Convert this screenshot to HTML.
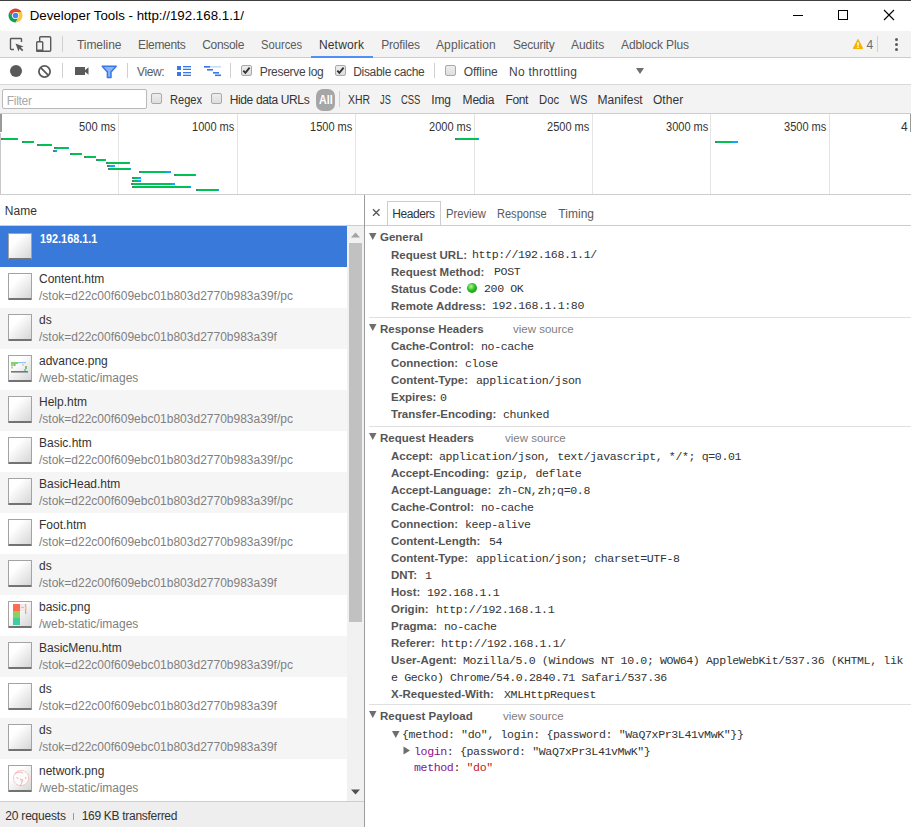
<!DOCTYPE html>
<html><head><meta charset="utf-8"><style>
html,body{margin:0;padding:0;width:911px;height:827px;overflow:hidden;background:#fff;position:relative}
body>div{position:absolute}
.t{position:absolute;line-height:0;white-space:nowrap}
</style></head><body>
<div style="left:0px;top:0px;width:911px;height:1px;background:#3f3f3f"></div>
<div style="left:0px;top:1px;width:911px;height:30px;background:#fff"></div>
<svg style="position:absolute;left:8px;top:7.6px" width="15" height="15" viewBox="0 0 15 15">
<path d="M7.5,7.5 L7.5,4.0 L13.562,4.0 A7 7 0 0 0 1.438,4.0 L4.469,9.25 Z" fill="#db4437"/>
<path d="M7.5,7.5 L7.5,4.0 L13.562,4.0 A7 7 0 0 1 7.5,14.5 L10.531,9.25 Z" fill="#fcc934"/>
<path d="M7.5,7.5 L4.469,9.25 L1.438,4.0 A7 7 0 0 0 7.5,14.5 L10.531,9.25 Z" fill="#0f9d58"/>
<circle cx="7.5" cy="7.5" r="3.5" fill="#fff"/>
<circle cx="7.5" cy="7.5" r="2.75" fill="#4285f4"/>
</svg>
<div class="t" style="left:29.70px;top:16.39px;font-size:13.3px;color:#000;font-family:'Liberation Sans', sans-serif;letter-spacing:0.003px;">Developer Tools - http://192.168.1.1/</div>
<div style="left:793px;top:15px;width:10px;height:1px;background:#000"></div>
<div style="left:838px;top:10px;width:10px;height:10px;border:1px solid #000;box-sizing:border-box"></div>
<svg style="position:absolute;left:883px;top:9px" width="12" height="12" viewBox="0 0 12 12"><path d="M1 1 L11 11 M11 1 L1 11" stroke="#000" stroke-width="1.1"/></svg>
<div style="left:0px;top:31px;width:911px;height:26px;background:#f3f3f3"></div>
<div style="left:0px;top:57px;width:911px;height:1px;background:#cdcdcd"></div>
<svg style="position:absolute;left:8px;top:36px" width="18" height="18" viewBox="0 0 18 18">
<path d="M6 13.5 H3.2 Q2.5 13.5 2.5 12.8 V3.2 Q2.5 2.5 3.2 2.5 H12.8 Q13.5 2.5 13.5 3.2 V6" fill="none" stroke="#5a5a5a" stroke-width="1.4"/>
<path d="M7.5 7.5 L15.5 10.5 L12.8 11.6 L15.3 14.1 L14.1 15.3 L11.6 12.8 L10.5 15.5 Z" fill="#5a5a5a"/>
</svg>
<svg style="position:absolute;left:34px;top:34px" width="20" height="20" viewBox="0 0 20 20">
<rect x="5.7" y="2.7" width="11" height="14.6" rx="1" fill="none" stroke="#5a5a5a" stroke-width="1.4"/>
<rect x="2.7" y="7.7" width="6" height="9.6" rx="0.8" fill="#f3f3f3" stroke="#5a5a5a" stroke-width="1.4"/>
<rect x="2.5" y="15.5" width="6.5" height="2" fill="#5a5a5a"/>
</svg>
<div style="left:62px;top:36px;width:1px;height:16px;background:#d0d0d0"></div>
<div class="t" style="left:77.00px;top:44.84px;font-size:12px;color:#5a5a5a;font-family:'Liberation Sans', sans-serif;letter-spacing:-0.059px;">Timeline</div>
<div class="t" style="left:138.00px;top:44.84px;font-size:12px;color:#5a5a5a;font-family:'Liberation Sans', sans-serif;letter-spacing:-0.316px;">Elements</div>
<div class="t" style="left:202.20px;top:44.84px;font-size:12px;color:#5a5a5a;font-family:'Liberation Sans', sans-serif;letter-spacing:-0.307px;">Console</div>
<div class="t" style="left:260.90px;top:44.84px;font-size:12px;color:#5a5a5a;font-family:'Liberation Sans', sans-serif;transform:scaleX(0.9339);transform-origin:0 0;">Sources</div>
<div class="t" style="left:318.90px;top:44.84px;font-size:12px;color:#333;font-family:'Liberation Sans', sans-serif;letter-spacing:0.193px;">Network</div>
<div class="t" style="left:381.20px;top:44.84px;font-size:12px;color:#5a5a5a;font-family:'Liberation Sans', sans-serif;letter-spacing:-0.189px;">Profiles</div>
<div class="t" style="left:436.00px;top:44.84px;font-size:12px;color:#5a5a5a;font-family:'Liberation Sans', sans-serif;letter-spacing:0.109px;">Application</div>
<div class="t" style="left:513.00px;top:44.84px;font-size:12px;color:#5a5a5a;font-family:'Liberation Sans', sans-serif;letter-spacing:-0.236px;">Security</div>
<div class="t" style="left:570.90px;top:44.84px;font-size:12px;color:#5a5a5a;font-family:'Liberation Sans', sans-serif;letter-spacing:0.008px;">Audits</div>
<div class="t" style="left:621.00px;top:44.84px;font-size:12px;color:#5a5a5a;font-family:'Liberation Sans', sans-serif;letter-spacing:-0.124px;">Adblock Plus</div>
<div style="left:311px;top:56px;width:62px;height:2px;background:#4f8ff6"></div>
<svg style="position:absolute;left:852px;top:38px" width="13" height="12" viewBox="0 0 13 12">
<path d="M6 1.8 L10.4 10.2 H1.6 Z" fill="#f4b400" stroke="#f4b400" stroke-width="1.4" stroke-linejoin="round"/>
<rect x="5.3" y="4.3" width="1.4" height="3.6" fill="#fff"/>
<rect x="5.3" y="8.7" width="1.4" height="1.3" fill="#fff"/>
</svg>
<div class="t" style="left:866.50px;top:44.84px;font-size:12px;color:#6a6a6a;font-family:'Liberation Sans', sans-serif;">4</div>
<div style="left:877px;top:36px;width:1px;height:16px;background:#d0d0d0"></div>
<div style="left:895px;top:37.8px;width:3.4px;height:3.4px;border-radius:50%;background:#5a5a5a"></div>
<div style="left:895px;top:42.8px;width:3.4px;height:3.4px;border-radius:50%;background:#5a5a5a"></div>
<div style="left:895px;top:47.8px;width:3.4px;height:3.4px;border-radius:50%;background:#5a5a5a"></div>
<div style="left:0px;top:58px;width:911px;height:26px;background:#fff"></div>
<div style="left:0px;top:84px;width:911px;height:1px;background:#d9d9d9"></div>
<div style="left:10px;top:65px;width:12px;height:12px;border-radius:50%;background:#5a5a5a"></div>
<svg style="position:absolute;left:37px;top:64px" width="15" height="15" viewBox="0 0 15 15"><circle cx="7.5" cy="7.5" r="5.6" fill="none" stroke="#5a5a5a" stroke-width="1.8"/><path d="M3.6 3.6 L11.4 11.4" stroke="#5a5a5a" stroke-width="1.8"/></svg>
<div style="left:62px;top:63px;width:1px;height:15px;background:#d0d0d0"></div>
<svg style="position:absolute;left:74px;top:66px" width="16" height="10" viewBox="0 0 16 10"><rect x="1" y="1" width="10" height="8" fill="#5a5a5a"/><path d="M10 5 L14.5 1.2 V8.8 Z" fill="#5a5a5a"/></svg>
<svg style="position:absolute;left:101px;top:65px" width="17" height="14" viewBox="0 0 17 14"><path d="M1.2 1.2 H15.2 L10 7 V12.5 L6.4 12.5 V7 Z" fill="#8ab4f8" stroke="#3b78e7" stroke-width="1.5" stroke-linejoin="round"/></svg>
<div style="left:127px;top:63px;width:1px;height:15px;background:#d0d0d0"></div>
<div class="t" style="left:137.00px;top:71.84px;font-size:12px;color:#5a5a5a;font-family:'Liberation Sans', sans-serif;letter-spacing:-0.382px;">View:</div>
<svg style="position:absolute;left:176px;top:65px" width="16" height="12" viewBox="0 0 16 12">
<rect x="1" y="1" width="4" height="4" fill="#3b78e7"/><rect x="1" y="7" width="4" height="4" fill="#3b78e7"/>
<rect x="7" y="1" width="8" height="1.3" fill="#3b78e7"/><rect x="7" y="3.7" width="8" height="1.3" fill="#3b78e7"/>
<rect x="7" y="7" width="8" height="1.3" fill="#3b78e7"/><rect x="7" y="9.7" width="8" height="1.3" fill="#3b78e7"/>
</svg>
<svg style="position:absolute;left:203px;top:65px" width="19" height="12" viewBox="0 0 19 12">
<rect x="1" y="1" width="17" height="1.6" fill="#c8dcf9"/>
<rect x="1" y="1" width="6" height="1.6" fill="#3b78e7"/>
<rect x="4" y="4" width="6" height="1.6" fill="#3b78e7"/>
<rect x="10" y="7" width="6" height="1.6" fill="#3b78e7"/>
<rect x="12" y="9.5" width="6" height="1.6" fill="#3b78e7"/>
</svg>
<div style="left:230px;top:63px;width:1px;height:15px;background:#d0d0d0"></div>
<div style="left:241px;top:65px;width:11px;height:11px;box-sizing:border-box;border:1px solid #a9a9a9;border-radius:2px;background:linear-gradient(#ededed,#dedede)"></div>
<svg style="position:absolute;left:241px;top:65px" width="11" height="11" viewBox="0 0 11 11"><path d="M2.3 5.6 L4.4 7.8 L8.6 2.6" fill="none" stroke="#333" stroke-width="1.9"/></svg>
<div class="t" style="left:259.70px;top:71.84px;font-size:12px;color:#444;font-family:'Liberation Sans', sans-serif;letter-spacing:-0.307px;">Preserve log</div>
<div style="left:335px;top:65px;width:11px;height:11px;box-sizing:border-box;border:1px solid #a9a9a9;border-radius:2px;background:linear-gradient(#ededed,#dedede)"></div>
<svg style="position:absolute;left:335px;top:65px" width="11" height="11" viewBox="0 0 11 11"><path d="M2.3 5.6 L4.4 7.8 L8.6 2.6" fill="none" stroke="#333" stroke-width="1.9"/></svg>
<div class="t" style="left:353.20px;top:71.84px;font-size:12px;color:#444;font-family:'Liberation Sans', sans-serif;letter-spacing:-0.316px;">Disable cache</div>
<div style="left:434px;top:63px;width:1px;height:15px;background:#d0d0d0"></div>
<div style="left:445px;top:65px;width:11px;height:11px;box-sizing:border-box;border:1px solid #a9a9a9;border-radius:2px;background:linear-gradient(#ededed,#dedede)"></div>
<div class="t" style="left:463.80px;top:71.84px;font-size:12px;color:#444;font-family:'Liberation Sans', sans-serif;letter-spacing:-0.078px;">Offline</div>
<div class="t" style="left:509.00px;top:71.84px;font-size:12px;color:#444;font-family:'Liberation Sans', sans-serif;letter-spacing:0.274px;">No throttling</div>
<svg style="position:absolute;left:635px;top:67px" width="10" height="8" viewBox="0 0 10 8"><path d="M1 1 H9 L5 7 Z" fill="#6e6e6e"/></svg>
<div style="left:0px;top:85px;width:911px;height:28px;background:#f3f3f3"></div>
<div style="left:0px;top:113px;width:911px;height:1px;background:#cdcdcd"></div>
<div style="left:2px;top:89px;width:145px;height:20px;box-sizing:border-box;border:1px solid #b9b9b9;border-radius:2px;background:#fff"></div>
<div class="t" style="left:6.80px;top:100.84px;font-size:12px;color:#a9a9a9;font-family:'Liberation Sans', sans-serif;letter-spacing:-0.294px;">Filter</div>
<div style="left:151px;top:93px;width:11px;height:11px;box-sizing:border-box;border:1px solid #a9a9a9;border-radius:2px;background:linear-gradient(#ededed,#dedede)"></div>
<div class="t" style="left:169.60px;top:100.04px;font-size:12px;color:#333;font-family:'Liberation Sans', sans-serif;transform:scaleX(0.9227);transform-origin:0 0;">Regex</div>
<div style="left:211px;top:93px;width:11px;height:11px;box-sizing:border-box;border:1px solid #a9a9a9;border-radius:2px;background:linear-gradient(#ededed,#dedede)"></div>
<div class="t" style="left:229.70px;top:100.04px;font-size:12px;color:#333;font-family:'Liberation Sans', sans-serif;letter-spacing:-0.363px;">Hide data URLs</div>
<div style="left:316px;top:89px;width:19px;height:22px;border-radius:7px;background:#a6a6a6"></div>
<div class="t" style="left:318.70px;top:100.04px;font-size:12px;color:#fff;font-family:'Liberation Sans', sans-serif;font-weight:bold;transform:scaleX(0.8871);transform-origin:0 0;">All</div>
<div style="left:339px;top:91px;width:1px;height:16px;background:#d0d0d0"></div>
<div class="t" style="left:347.80px;top:100.04px;font-size:12px;color:#333;font-family:'Liberation Sans', sans-serif;transform:scaleX(0.8679);transform-origin:0 0;">XHR</div>
<div class="t" style="left:380.00px;top:100.04px;font-size:12px;color:#333;font-family:'Liberation Sans', sans-serif;transform:scaleX(0.7709);transform-origin:0 0;">JS</div>
<div class="t" style="left:401.00px;top:100.04px;font-size:12px;color:#333;font-family:'Liberation Sans', sans-serif;transform:scaleX(0.7867);transform-origin:0 0;">CSS</div>
<div class="t" style="left:431.30px;top:100.04px;font-size:12px;color:#333;font-family:'Liberation Sans', sans-serif;letter-spacing:-0.155px;">Img</div>
<div class="t" style="left:462.60px;top:100.04px;font-size:12px;color:#333;font-family:'Liberation Sans', sans-serif;letter-spacing:-0.200px;">Media</div>
<div class="t" style="left:505.40px;top:100.04px;font-size:12px;color:#333;font-family:'Liberation Sans', sans-serif;letter-spacing:-0.333px;">Font</div>
<div class="t" style="left:539.00px;top:100.04px;font-size:12px;color:#333;font-family:'Liberation Sans', sans-serif;transform:scaleX(0.9376);transform-origin:0 0;">Doc</div>
<div class="t" style="left:569.60px;top:100.04px;font-size:12px;color:#333;font-family:'Liberation Sans', sans-serif;transform:scaleX(0.9006);transform-origin:0 0;">WS</div>
<div class="t" style="left:597.60px;top:100.04px;font-size:12px;color:#333;font-family:'Liberation Sans', sans-serif;letter-spacing:-0.037px;">Manifest</div>
<div class="t" style="left:652.90px;top:100.04px;font-size:12px;color:#333;font-family:'Liberation Sans', sans-serif;letter-spacing:0.075px;">Other</div>
<div style="left:0px;top:114px;width:911px;height:80px;background:#fff"></div>
<div style="left:0px;top:194px;width:911px;height:1px;background:#cdcdcd"></div>
<div style="left:118px;top:114px;width:1px;height:80px;background:#e4e4e4"></div>
<div style="left:237px;top:114px;width:1px;height:80px;background:#e4e4e4"></div>
<div style="left:355px;top:114px;width:1px;height:80px;background:#e4e4e4"></div>
<div style="left:474px;top:114px;width:1px;height:80px;background:#e4e4e4"></div>
<div style="left:592px;top:114px;width:1px;height:80px;background:#e4e4e4"></div>
<div style="left:710px;top:114px;width:1px;height:80px;background:#e4e4e4"></div>
<div style="left:829px;top:114px;width:1px;height:80px;background:#e4e4e4"></div>
<div class="t" style="left:79.40px;top:127.34px;font-size:12px;color:#333;font-family:'Liberation Sans', sans-serif;transform:scaleX(0.9273);transform-origin:0 0;">500 ms</div>
<div class="t" style="left:192.00px;top:127.34px;font-size:12px;color:#333;font-family:'Liberation Sans', sans-serif;transform:scaleX(0.9192);transform-origin:0 0;">1000 ms</div>
<div class="t" style="left:310.40px;top:127.34px;font-size:12px;color:#333;font-family:'Liberation Sans', sans-serif;transform:scaleX(0.9192);transform-origin:0 0;">1500 ms</div>
<div class="t" style="left:428.80px;top:127.34px;font-size:12px;color:#333;font-family:'Liberation Sans', sans-serif;transform:scaleX(0.9192);transform-origin:0 0;">2000 ms</div>
<div class="t" style="left:547.20px;top:127.34px;font-size:12px;color:#333;font-family:'Liberation Sans', sans-serif;transform:scaleX(0.9192);transform-origin:0 0;">2500 ms</div>
<div class="t" style="left:665.60px;top:127.34px;font-size:12px;color:#333;font-family:'Liberation Sans', sans-serif;transform:scaleX(0.9192);transform-origin:0 0;">3000 ms</div>
<div class="t" style="left:784.00px;top:127.34px;font-size:12px;color:#333;font-family:'Liberation Sans', sans-serif;transform:scaleX(0.9192);transform-origin:0 0;">3500 ms</div>
<div class="t" style="left:901.00px;top:127.34px;font-size:12px;color:#333;font-family:'Liberation Sans', sans-serif;">40</div>
<div style="left:908px;top:114px;width:3px;height:20px;background:#fff"></div>
<div style="left:910px;top:114px;width:1px;height:18px;background:#9a9a9a"></div>
<div style="left:0px;top:114px;width:2px;height:18px;background:#9a9a9a"></div>
<div style="left:0px;top:133px;width:1px;height:61px;background:#c8c8c8"></div>
<div style="left:1px;top:138px;width:2px;height:2px;background:#4f7f73"></div>
<div style="left:3px;top:138px;width:15px;height:2px;background:#00c153"></div>
<div style="left:16.5px;top:138px;width:1.5px;height:2px;background:#0ea6ff"></div>
<div style="left:22px;top:141px;width:2px;height:2px;background:#4f7f73"></div>
<div style="left:24px;top:141px;width:10px;height:2px;background:#00c153"></div>
<div style="left:32.5px;top:141px;width:1.5px;height:2px;background:#0ea6ff"></div>
<div style="left:37px;top:144px;width:2px;height:2px;background:#4f7f73"></div>
<div style="left:39px;top:144px;width:13px;height:2px;background:#00c153"></div>
<div style="left:50.5px;top:144px;width:1.5px;height:2px;background:#0ea6ff"></div>
<div style="left:54px;top:147px;width:2px;height:2px;background:#4f7f73"></div>
<div style="left:56px;top:147px;width:13px;height:2px;background:#00c153"></div>
<div style="left:67.5px;top:147px;width:1.5px;height:2px;background:#0ea6ff"></div>
<div style="left:53px;top:150px;width:2px;height:2px;background:#4f7f73"></div>
<div style="left:55px;top:150px;width:2px;height:2px;background:#00c153"></div>
<div style="left:55.5px;top:150px;width:1.5px;height:2px;background:#0ea6ff"></div>
<div style="left:70px;top:153px;width:2px;height:2px;background:#4f7f73"></div>
<div style="left:72px;top:153px;width:10px;height:2px;background:#00c153"></div>
<div style="left:80.5px;top:153px;width:1.5px;height:2px;background:#0ea6ff"></div>
<div style="left:84px;top:156px;width:2px;height:2px;background:#4f7f73"></div>
<div style="left:86px;top:156px;width:10px;height:2px;background:#00c153"></div>
<div style="left:94.5px;top:156px;width:1.5px;height:2px;background:#0ea6ff"></div>
<div style="left:96px;top:159px;width:2px;height:2px;background:#4f7f73"></div>
<div style="left:98px;top:159px;width:8px;height:2px;background:#00c153"></div>
<div style="left:104.5px;top:159px;width:1.5px;height:2px;background:#0ea6ff"></div>
<div style="left:106px;top:162px;width:2px;height:2px;background:#4f7f73"></div>
<div style="left:108px;top:162px;width:22px;height:2px;background:#00c153"></div>
<div style="left:128.5px;top:162px;width:1.5px;height:2px;background:#0ea6ff"></div>
<div style="left:107px;top:165px;width:2px;height:2px;background:#4f7f73"></div>
<div style="left:109px;top:165px;width:6px;height:2px;background:#00c153"></div>
<div style="left:110px;top:165px;width:5px;height:2px;background:#0ea6ff"></div>
<div style="left:108px;top:168px;width:2px;height:2px;background:#4f7f73"></div>
<div style="left:110px;top:168px;width:21px;height:2px;background:#00c153"></div>
<div style="left:129.5px;top:168px;width:1.5px;height:2px;background:#0ea6ff"></div>
<div style="left:139px;top:171px;width:2px;height:2px;background:#4f7f73"></div>
<div style="left:141px;top:171px;width:30px;height:2px;background:#00c153"></div>
<div style="left:166px;top:171px;width:5px;height:2px;background:#0ea6ff"></div>
<div style="left:174px;top:174px;width:2px;height:2px;background:#4f7f73"></div>
<div style="left:176px;top:174px;width:20px;height:2px;background:#00c153"></div>
<div style="left:194.5px;top:174px;width:1.5px;height:2px;background:#0ea6ff"></div>
<div style="left:132px;top:177px;width:2px;height:2px;background:#4f7f73"></div>
<div style="left:134px;top:177px;width:7px;height:2px;background:#00c153"></div>
<div style="left:138px;top:177px;width:3px;height:2px;background:#0ea6ff"></div>
<div style="left:132px;top:180px;width:2px;height:2px;background:#4f7f73"></div>
<div style="left:134px;top:180px;width:7px;height:2px;background:#00c153"></div>
<div style="left:138px;top:180px;width:3px;height:2px;background:#0ea6ff"></div>
<div style="left:131px;top:183px;width:2px;height:2px;background:#4f7f73"></div>
<div style="left:133px;top:183px;width:42px;height:2px;background:#00c153"></div>
<div style="left:172px;top:183px;width:3px;height:2px;background:#0ea6ff"></div>
<div style="left:132px;top:186px;width:2px;height:2px;background:#4f7f73"></div>
<div style="left:134px;top:186px;width:57px;height:2px;background:#00c153"></div>
<div style="left:189.5px;top:186px;width:1.5px;height:2px;background:#0ea6ff"></div>
<div style="left:196px;top:189px;width:2px;height:2px;background:#4f7f73"></div>
<div style="left:198px;top:189px;width:21px;height:2px;background:#00c153"></div>
<div style="left:217.5px;top:189px;width:1.5px;height:2px;background:#0ea6ff"></div>
<div style="left:455px;top:138px;width:2px;height:2px;background:#4f7f73"></div>
<div style="left:457px;top:138px;width:22px;height:2px;background:#00c153"></div>
<div style="left:477.5px;top:138px;width:1.5px;height:2px;background:#0ea6ff"></div>
<div style="left:715px;top:141px;width:2px;height:2px;background:#4f7f73"></div>
<div style="left:717px;top:141px;width:21px;height:2px;background:#00c153"></div>
<div style="left:732px;top:141px;width:6px;height:2px;background:#0ea6ff"></div>
<div style="left:0px;top:195px;width:364px;height:30px;background:#fff"></div>
<div style="left:0px;top:225px;width:911px;height:1px;background:#cdcdcd"></div>
<div class="t" style="left:4.80px;top:210.84px;font-size:12px;color:#333;font-family:'Liberation Sans', sans-serif;">Name</div>
<div style="left:0px;top:226px;width:347px;height:41px;background:#3879d9"></div>
<div style="left:8px;top:233px;width:24px;height:27px;box-sizing:border-box;border:1px solid #a3a3a3;border-bottom:2px solid #737373;border-radius:1px;background:linear-gradient(135deg,#ffffff 30%,#d6d6d6 100%)"></div>
<div class="t" style="left:40.20px;top:238.64px;font-size:12px;color:#fff;font-family:'Liberation Sans', sans-serif;font-weight:bold;transform:scaleX(0.9039);transform-origin:0 0;">192.168.1.1</div>
<div style="left:0px;top:267px;width:347px;height:41px;background:#fff"></div>
<div style="left:8px;top:273px;width:24px;height:27px;box-sizing:border-box;border:1px solid #a3a3a3;border-bottom:2px solid #737373;border-radius:1px;background:linear-gradient(135deg,#ffffff 30%,#d6d6d6 100%)"></div>
<div class="t" style="left:39.00px;top:278.84px;font-size:12px;color:#333;font-family:'Liberation Sans', sans-serif;">Content.htm</div>
<div class="t" style="left:39.00px;top:295.84px;font-size:12px;color:#808080;font-family:'Liberation Sans', sans-serif;">/stok=d22c00f609ebc01b803d2770b983a39f/pc</div>
<div style="left:0px;top:308px;width:347px;height:41px;background:#f5f5f5"></div>
<div style="left:8px;top:314px;width:24px;height:27px;box-sizing:border-box;border:1px solid #a3a3a3;border-bottom:2px solid #737373;border-radius:1px;background:linear-gradient(135deg,#ffffff 30%,#d6d6d6 100%)"></div>
<div class="t" style="left:39.00px;top:319.84px;font-size:12px;color:#333;font-family:'Liberation Sans', sans-serif;">ds</div>
<div class="t" style="left:39.00px;top:336.84px;font-size:12px;color:#808080;font-family:'Liberation Sans', sans-serif;">/stok=d22c00f609ebc01b803d2770b983a39f</div>
<div style="left:0px;top:349px;width:347px;height:41px;background:#fff"></div>
<div style="left:8px;top:355px;width:24px;height:27px;box-sizing:border-box;border:1px solid #a3a3a3;border-bottom:2px solid #737373;border-radius:1px;background:linear-gradient(135deg,#ffffff 30%,#d6d6d6 100%)"></div>
<svg style="position:absolute;left:10px;top:361px" width="20" height="13" viewBox="0 0 20 13"><rect x="1" y="1" width="7" height="2" fill="#7ed957"/><rect x="8" y="1" width="8" height="1.2" fill="#8cc8f0"/><rect x="1" y="3" width="2" height="2" fill="#8fd870"/><rect x="3.5" y="3" width="2" height="2" fill="#999"/><rect x="12" y="3.5" width="2" height="1" fill="#f4a0a0"/><rect x="1" y="5.5" width="2" height="2" fill="#a6e086"/><rect x="15" y="5" width="2" height="3" fill="#7cc860"/><rect x="14" y="8" width="2" height="2" fill="#7fc4f0"/><rect x="1" y="10" width="17" height="1.6" fill="#777"/></svg>
<div class="t" style="left:39.00px;top:360.84px;font-size:12px;color:#333;font-family:'Liberation Sans', sans-serif;">advance.png</div>
<div class="t" style="left:39.00px;top:377.84px;font-size:12px;color:#808080;font-family:'Liberation Sans', sans-serif;">/web-static/images</div>
<div style="left:0px;top:390px;width:347px;height:41px;background:#f5f5f5"></div>
<div style="left:8px;top:396px;width:24px;height:27px;box-sizing:border-box;border:1px solid #a3a3a3;border-bottom:2px solid #737373;border-radius:1px;background:linear-gradient(135deg,#ffffff 30%,#d6d6d6 100%)"></div>
<div class="t" style="left:39.00px;top:401.84px;font-size:12px;color:#333;font-family:'Liberation Sans', sans-serif;">Help.htm</div>
<div class="t" style="left:39.00px;top:418.84px;font-size:12px;color:#808080;font-family:'Liberation Sans', sans-serif;">/stok=d22c00f609ebc01b803d2770b983a39f/pc</div>
<div style="left:0px;top:431px;width:347px;height:41px;background:#fff"></div>
<div style="left:8px;top:437px;width:24px;height:27px;box-sizing:border-box;border:1px solid #a3a3a3;border-bottom:2px solid #737373;border-radius:1px;background:linear-gradient(135deg,#ffffff 30%,#d6d6d6 100%)"></div>
<div class="t" style="left:39.00px;top:442.84px;font-size:12px;color:#333;font-family:'Liberation Sans', sans-serif;">Basic.htm</div>
<div class="t" style="left:39.00px;top:459.84px;font-size:12px;color:#808080;font-family:'Liberation Sans', sans-serif;">/stok=d22c00f609ebc01b803d2770b983a39f/pc</div>
<div style="left:0px;top:472px;width:347px;height:41px;background:#f5f5f5"></div>
<div style="left:8px;top:478px;width:24px;height:27px;box-sizing:border-box;border:1px solid #a3a3a3;border-bottom:2px solid #737373;border-radius:1px;background:linear-gradient(135deg,#ffffff 30%,#d6d6d6 100%)"></div>
<div class="t" style="left:39.00px;top:483.84px;font-size:12px;color:#333;font-family:'Liberation Sans', sans-serif;">BasicHead.htm</div>
<div class="t" style="left:39.00px;top:500.84px;font-size:12px;color:#808080;font-family:'Liberation Sans', sans-serif;">/stok=d22c00f609ebc01b803d2770b983a39f/pc</div>
<div style="left:0px;top:513px;width:347px;height:41px;background:#fff"></div>
<div style="left:8px;top:519px;width:24px;height:27px;box-sizing:border-box;border:1px solid #a3a3a3;border-bottom:2px solid #737373;border-radius:1px;background:linear-gradient(135deg,#ffffff 30%,#d6d6d6 100%)"></div>
<div class="t" style="left:39.00px;top:524.84px;font-size:12px;color:#333;font-family:'Liberation Sans', sans-serif;">Foot.htm</div>
<div class="t" style="left:39.00px;top:541.84px;font-size:12px;color:#808080;font-family:'Liberation Sans', sans-serif;">/stok=d22c00f609ebc01b803d2770b983a39f/pc</div>
<div style="left:0px;top:554px;width:347px;height:41px;background:#f5f5f5"></div>
<div style="left:8px;top:560px;width:24px;height:27px;box-sizing:border-box;border:1px solid #a3a3a3;border-bottom:2px solid #737373;border-radius:1px;background:linear-gradient(135deg,#ffffff 30%,#d6d6d6 100%)"></div>
<div class="t" style="left:39.00px;top:565.84px;font-size:12px;color:#333;font-family:'Liberation Sans', sans-serif;">ds</div>
<div class="t" style="left:39.00px;top:582.84px;font-size:12px;color:#808080;font-family:'Liberation Sans', sans-serif;">/stok=d22c00f609ebc01b803d2770b983a39f</div>
<div style="left:0px;top:595px;width:347px;height:41px;background:#fff"></div>
<div style="left:8px;top:601px;width:24px;height:27px;box-sizing:border-box;border:1px solid #a3a3a3;border-bottom:2px solid #737373;border-radius:1px;background:linear-gradient(135deg,#ffffff 30%,#d6d6d6 100%)"></div>
<svg style="position:absolute;left:12px;top:604px" width="16" height="22" viewBox="0 0 16 22"><rect x="1" y="0" width="7" height="7" fill="#ff6b52"/><rect x="1" y="7" width="7" height="7" fill="#8fd05a"/><rect x="1" y="14" width="7" height="7" fill="#3dcfa0"/><rect x="8" y="0" width="6" height="7" fill="#f3e9e9"/><rect x="9" y="3" width="3" height="1" fill="#f0c080"/><rect x="13" y="0" width="1.3" height="10" fill="#f0a0a0"/><rect x="13" y="3" width="1.3" height="2" fill="#f0d060"/></svg>
<div class="t" style="left:39.00px;top:606.84px;font-size:12px;color:#333;font-family:'Liberation Sans', sans-serif;">basic.png</div>
<div class="t" style="left:39.00px;top:623.84px;font-size:12px;color:#808080;font-family:'Liberation Sans', sans-serif;">/web-static/images</div>
<div style="left:0px;top:636px;width:347px;height:41px;background:#f5f5f5"></div>
<div style="left:8px;top:642px;width:24px;height:27px;box-sizing:border-box;border:1px solid #a3a3a3;border-bottom:2px solid #737373;border-radius:1px;background:linear-gradient(135deg,#ffffff 30%,#d6d6d6 100%)"></div>
<div class="t" style="left:39.00px;top:647.84px;font-size:12px;color:#333;font-family:'Liberation Sans', sans-serif;">BasicMenu.htm</div>
<div class="t" style="left:39.00px;top:664.84px;font-size:12px;color:#808080;font-family:'Liberation Sans', sans-serif;">/stok=d22c00f609ebc01b803d2770b983a39f/pc</div>
<div style="left:0px;top:677px;width:347px;height:41px;background:#fff"></div>
<div style="left:8px;top:683px;width:24px;height:27px;box-sizing:border-box;border:1px solid #a3a3a3;border-bottom:2px solid #737373;border-radius:1px;background:linear-gradient(135deg,#ffffff 30%,#d6d6d6 100%)"></div>
<div class="t" style="left:39.00px;top:688.84px;font-size:12px;color:#333;font-family:'Liberation Sans', sans-serif;">ds</div>
<div class="t" style="left:39.00px;top:705.84px;font-size:12px;color:#808080;font-family:'Liberation Sans', sans-serif;">/stok=d22c00f609ebc01b803d2770b983a39f</div>
<div style="left:0px;top:718px;width:347px;height:41px;background:#f5f5f5"></div>
<div style="left:8px;top:724px;width:24px;height:27px;box-sizing:border-box;border:1px solid #a3a3a3;border-bottom:2px solid #737373;border-radius:1px;background:linear-gradient(135deg,#ffffff 30%,#d6d6d6 100%)"></div>
<div class="t" style="left:39.00px;top:729.84px;font-size:12px;color:#333;font-family:'Liberation Sans', sans-serif;">ds</div>
<div class="t" style="left:39.00px;top:746.84px;font-size:12px;color:#808080;font-family:'Liberation Sans', sans-serif;">/stok=d22c00f609ebc01b803d2770b983a39f</div>
<div style="left:0px;top:759px;width:347px;height:41px;background:#fff"></div>
<div style="left:8px;top:765px;width:24px;height:27px;box-sizing:border-box;border:1px solid #a3a3a3;border-bottom:2px solid #737373;border-radius:1px;background:linear-gradient(135deg,#ffffff 30%,#d6d6d6 100%)"></div>
<svg style="position:absolute;left:11px;top:769px" width="20" height="20" viewBox="0 0 20 20"><circle cx="10" cy="9" r="7.6" fill="#fbfbfb" stroke="#f2a09a" stroke-width="0.8" stroke-dasharray="1.2 0.6"/><path d="M4 4.5 Q7 2.5 10 3 L12 4.5 M5.5 8.5 L7.5 9.5 M9 10 L12 11 L11 13 L9.5 16.5 M14.5 8 L15 10" fill="none" stroke="#f09a95" stroke-width="0.8"/><path d="M9.8 11 L12 12 L10 16 Z" fill="#d8d8d8"/></svg>
<div class="t" style="left:39.00px;top:770.84px;font-size:12px;color:#333;font-family:'Liberation Sans', sans-serif;">network.png</div>
<div class="t" style="left:39.00px;top:787.84px;font-size:12px;color:#808080;font-family:'Liberation Sans', sans-serif;">/web-static/images</div>
<div style="left:347px;top:226px;width:17px;height:575px;background:#f1f1f1"></div>
<svg style="position:absolute;left:350px;top:231px" width="11" height="8" viewBox="0 0 11 8"><path d="M1 6.5 L5.5 1.5 L10 6.5 Z" fill="#a3a3a3"/></svg>
<div style="left:349px;top:243px;width:13px;height:379px;background:#c1c1c1"></div>
<svg style="position:absolute;left:350px;top:788px" width="11" height="8" viewBox="0 0 11 8"><path d="M1 1.5 L5.5 6.5 L10 1.5 Z" fill="#505050"/></svg>
<div style="left:0px;top:801px;width:364px;height:1px;background:#cdcdcd"></div>
<div style="left:0px;top:802px;width:364px;height:25px;background:#eee"></div>
<div class="t" style="left:5.30px;top:815.84px;font-size:12px;color:#333;font-family:'Liberation Sans', sans-serif;letter-spacing:-0.210px;">20 requests</div>
<div style="left:73px;top:813px;width:1px;height:7px;background:#999"></div>
<div class="t" style="left:81.70px;top:815.84px;font-size:12px;color:#333;font-family:'Liberation Sans', sans-serif;letter-spacing:-0.296px;">169 KB transferred</div>
<div style="left:364px;top:195px;width:1px;height:632px;background:#9c9c9c"></div>
<div style="left:365px;top:195px;width:546px;height:632px;background:#fff"></div>
<div style="left:365px;top:225px;width:546px;height:1px;background:#cdcdcd"></div>
<svg style="position:absolute;left:370px;top:206px" width="12" height="12" viewBox="0 0 12 12"><path d="M3 3.3 L9.5 9.8 M9.5 3.3 L3 9.8" stroke="#5a5a5a" stroke-width="1.4"/></svg>
<div style="left:387px;top:201px;width:54px;height:24px;box-sizing:border-box;border:1px solid #cdcdcd;border-bottom:none;background:#fff"></div>
<div class="t" style="left:392.20px;top:214.34px;font-size:12px;color:#333;font-family:'Liberation Sans', sans-serif;letter-spacing:-0.427px;">Headers</div>
<div class="t" style="left:446.20px;top:214.34px;font-size:12px;color:#5a5a5a;font-family:'Liberation Sans', sans-serif;transform:scaleX(0.9340);transform-origin:0 0;">Preview</div>
<div class="t" style="left:497.30px;top:214.34px;font-size:12px;color:#5a5a5a;font-family:'Liberation Sans', sans-serif;transform:scaleX(0.9199);transform-origin:0 0;">Response</div>
<div class="t" style="left:558.30px;top:214.34px;font-size:12px;color:#5a5a5a;font-family:'Liberation Sans', sans-serif;letter-spacing:0.030px;">Timing</div>
<svg style="position:absolute;left:369.3px;top:232.5px" width="9" height="8" viewBox="0 0 9 8"><path d="M0 0 H7.5 L3.75 7 Z" fill="#6e6e6e"/></svg>
<div class="t" style="left:380.00px;top:237.02px;font-size:11.5px;color:#555;font-family:'Liberation Sans', sans-serif;font-weight:bold;">General</div>
<div class="t" style="left:391.00px;top:254.52px;font-size:11.5px;color:#555;font-family:'Liberation Sans', sans-serif;font-weight:bold;">Request URL:</div>
<div class="t" style="left:472.00px;top:255.41px;font-size:11.6px;color:#333;font-family:'Liberation Mono', monospace;letter-spacing:-0.39px;">http://192.168.1.1/</div>
<div class="t" style="left:391.00px;top:271.52px;font-size:11.5px;color:#555;font-family:'Liberation Sans', sans-serif;font-weight:bold;">Request Method:</div>
<div class="t" style="left:494.00px;top:272.41px;font-size:11.6px;color:#333;font-family:'Liberation Mono', monospace;letter-spacing:-0.39px;">POST</div>
<div class="t" style="left:391.00px;top:288.52px;font-size:11.5px;color:#555;font-family:'Liberation Sans', sans-serif;font-weight:bold;">Status Code:</div>
<div class="t" style="left:484.00px;top:289.41px;font-size:11.6px;color:#333;font-family:'Liberation Mono', monospace;letter-spacing:-0.39px;">200 OK</div>
<div style="left:467px;top:283px;width:10px;height:10px;border-radius:50%;background:radial-gradient(circle at 40% 35%,#b6f5a8 0%,#2bbd20 45%,#0b8a08 100%)"></div>
<div class="t" style="left:391.00px;top:305.52px;font-size:11.5px;color:#555;font-family:'Liberation Sans', sans-serif;font-weight:bold;">Remote Address:</div>
<div class="t" style="left:492.00px;top:306.41px;font-size:11.6px;color:#333;font-family:'Liberation Mono', monospace;letter-spacing:-0.39px;">192.168.1.1:80</div>
<div style="left:369px;top:317px;width:542px;height:1px;background:#e0e0e0"></div>
<svg style="position:absolute;left:369.3px;top:324.2px" width="9" height="8" viewBox="0 0 9 8"><path d="M0 0 H7.5 L3.75 7 Z" fill="#6e6e6e"/></svg>
<div class="t" style="left:380.00px;top:328.72px;font-size:11.5px;color:#555;font-family:'Liberation Sans', sans-serif;font-weight:bold;">Response Headers</div>
<div class="t" style="left:513.00px;top:328.72px;font-size:11.5px;color:#808080;font-family:'Liberation Sans', sans-serif;">view source</div>
<div class="t" style="left:391.00px;top:346.02px;font-size:11.5px;color:#555;font-family:'Liberation Sans', sans-serif;font-weight:bold;">Cache-Control:</div>
<div class="t" style="left:481.00px;top:346.91px;font-size:11.6px;color:#333;font-family:'Liberation Mono', monospace;letter-spacing:-0.39px;">no-cache</div>
<div class="t" style="left:391.00px;top:363.02px;font-size:11.5px;color:#555;font-family:'Liberation Sans', sans-serif;font-weight:bold;">Connection:</div>
<div class="t" style="left:465.00px;top:363.91px;font-size:11.6px;color:#333;font-family:'Liberation Mono', monospace;letter-spacing:-0.39px;">close</div>
<div class="t" style="left:391.00px;top:380.02px;font-size:11.5px;color:#555;font-family:'Liberation Sans', sans-serif;font-weight:bold;">Content-Type:</div>
<div class="t" style="left:476.00px;top:380.91px;font-size:11.6px;color:#333;font-family:'Liberation Mono', monospace;letter-spacing:-0.39px;">application/json</div>
<div class="t" style="left:391.00px;top:397.02px;font-size:11.5px;color:#555;font-family:'Liberation Sans', sans-serif;font-weight:bold;">Expires:</div>
<div class="t" style="left:440.00px;top:397.91px;font-size:11.6px;color:#333;font-family:'Liberation Mono', monospace;letter-spacing:-0.39px;">0</div>
<div class="t" style="left:391.00px;top:414.02px;font-size:11.5px;color:#555;font-family:'Liberation Sans', sans-serif;font-weight:bold;">Transfer-Encoding:</div>
<div class="t" style="left:503.00px;top:414.91px;font-size:11.6px;color:#333;font-family:'Liberation Mono', monospace;letter-spacing:-0.39px;">chunked</div>
<div style="left:369px;top:426px;width:542px;height:1px;background:#e0e0e0"></div>
<svg style="position:absolute;left:369.3px;top:433.3px" width="9" height="8" viewBox="0 0 9 8"><path d="M0 0 H7.5 L3.75 7 Z" fill="#6e6e6e"/></svg>
<div class="t" style="left:380.00px;top:437.82px;font-size:11.5px;color:#555;font-family:'Liberation Sans', sans-serif;font-weight:bold;">Request Headers</div>
<div class="t" style="left:505.00px;top:437.82px;font-size:11.5px;color:#808080;font-family:'Liberation Sans', sans-serif;">view source</div>
<div class="t" style="left:391.00px;top:455.62px;font-size:11.5px;color:#555;font-family:'Liberation Sans', sans-serif;font-weight:bold;">Accept:</div>
<div class="t" style="left:439.00px;top:456.51px;font-size:11.6px;color:#333;font-family:'Liberation Mono', monospace;letter-spacing:-0.39px;">application/json, text/javascript, */*; q=0.01</div>
<div class="t" style="left:391.00px;top:472.62px;font-size:11.5px;color:#555;font-family:'Liberation Sans', sans-serif;font-weight:bold;">Accept-Encoding:</div>
<div class="t" style="left:496.00px;top:473.51px;font-size:11.6px;color:#333;font-family:'Liberation Mono', monospace;letter-spacing:-0.39px;">gzip, deflate</div>
<div class="t" style="left:391.00px;top:489.62px;font-size:11.5px;color:#555;font-family:'Liberation Sans', sans-serif;font-weight:bold;">Accept-Language:</div>
<div class="t" style="left:498.00px;top:490.51px;font-size:11.6px;color:#333;font-family:'Liberation Mono', monospace;letter-spacing:-0.39px;">zh-CN,zh;q=0.8</div>
<div class="t" style="left:391.00px;top:506.62px;font-size:11.5px;color:#555;font-family:'Liberation Sans', sans-serif;font-weight:bold;">Cache-Control:</div>
<div class="t" style="left:481.00px;top:507.51px;font-size:11.6px;color:#333;font-family:'Liberation Mono', monospace;letter-spacing:-0.39px;">no-cache</div>
<div class="t" style="left:391.00px;top:523.62px;font-size:11.5px;color:#555;font-family:'Liberation Sans', sans-serif;font-weight:bold;">Connection:</div>
<div class="t" style="left:465.00px;top:524.51px;font-size:11.6px;color:#333;font-family:'Liberation Mono', monospace;letter-spacing:-0.39px;">keep-alive</div>
<div class="t" style="left:391.00px;top:540.62px;font-size:11.5px;color:#555;font-family:'Liberation Sans', sans-serif;font-weight:bold;">Content-Length:</div>
<div class="t" style="left:489.00px;top:541.51px;font-size:11.6px;color:#333;font-family:'Liberation Mono', monospace;letter-spacing:-0.39px;">54</div>
<div class="t" style="left:391.00px;top:557.62px;font-size:11.5px;color:#555;font-family:'Liberation Sans', sans-serif;font-weight:bold;">Content-Type:</div>
<div class="t" style="left:476.00px;top:558.51px;font-size:11.6px;color:#333;font-family:'Liberation Mono', monospace;letter-spacing:-0.39px;">application/json; charset=UTF-8</div>
<div class="t" style="left:391.00px;top:574.62px;font-size:11.5px;color:#555;font-family:'Liberation Sans', sans-serif;font-weight:bold;">DNT:</div>
<div class="t" style="left:425.00px;top:575.51px;font-size:11.6px;color:#333;font-family:'Liberation Mono', monospace;letter-spacing:-0.39px;">1</div>
<div class="t" style="left:391.00px;top:591.62px;font-size:11.5px;color:#555;font-family:'Liberation Sans', sans-serif;font-weight:bold;">Host:</div>
<div class="t" style="left:427.00px;top:592.51px;font-size:11.6px;color:#333;font-family:'Liberation Mono', monospace;letter-spacing:-0.39px;">192.168.1.1</div>
<div class="t" style="left:391.00px;top:608.62px;font-size:11.5px;color:#555;font-family:'Liberation Sans', sans-serif;font-weight:bold;">Origin:</div>
<div class="t" style="left:436.00px;top:609.51px;font-size:11.6px;color:#333;font-family:'Liberation Mono', monospace;letter-spacing:-0.39px;">http://192.168.1.1</div>
<div class="t" style="left:391.00px;top:625.62px;font-size:11.5px;color:#555;font-family:'Liberation Sans', sans-serif;font-weight:bold;">Pragma:</div>
<div class="t" style="left:444.00px;top:626.51px;font-size:11.6px;color:#333;font-family:'Liberation Mono', monospace;letter-spacing:-0.39px;">no-cache</div>
<div class="t" style="left:391.00px;top:642.62px;font-size:11.5px;color:#555;font-family:'Liberation Sans', sans-serif;font-weight:bold;">Referer:</div>
<div class="t" style="left:441.00px;top:643.51px;font-size:11.6px;color:#333;font-family:'Liberation Mono', monospace;letter-spacing:-0.39px;">http://192.168.1.1/</div>
<div class="t" style="left:391.00px;top:659.62px;font-size:11.5px;color:#555;font-family:'Liberation Sans', sans-serif;font-weight:bold;">User-Agent:</div>
<div class="t" style="left:463.00px;top:660.51px;font-size:11.6px;color:#333;font-family:'Liberation Mono', monospace;letter-spacing:-0.39px;">Mozilla/5.0 (Windows NT 10.0; WOW64) AppleWebKit/537.36 (KHTML, lik</div>
<div class="t" style="left:391.00px;top:677.51px;font-size:11.6px;color:#333;font-family:'Liberation Mono', monospace;letter-spacing:-0.39px;">e Gecko) Chrome/54.0.2840.71 Safari/537.36</div>
<div class="t" style="left:391.00px;top:693.62px;font-size:11.5px;color:#555;font-family:'Liberation Sans', sans-serif;font-weight:bold;">X-Requested-With:</div>
<div class="t" style="left:504.00px;top:694.51px;font-size:11.6px;color:#333;font-family:'Liberation Mono', monospace;letter-spacing:-0.39px;">XMLHttpRequest</div>
<div style="left:369px;top:704px;width:542px;height:1px;background:#e0e0e0"></div>
<svg style="position:absolute;left:369.3px;top:711.0px" width="9" height="8" viewBox="0 0 9 8"><path d="M0 0 H7.5 L3.75 7 Z" fill="#6e6e6e"/></svg>
<div class="t" style="left:380.00px;top:715.52px;font-size:11.5px;color:#555;font-family:'Liberation Sans', sans-serif;font-weight:bold;">Request Payload</div>
<div class="t" style="left:503.00px;top:715.52px;font-size:11.5px;color:#808080;font-family:'Liberation Sans', sans-serif;">view source</div>
<svg style="position:absolute;left:391.5px;top:731px" width="9" height="8" viewBox="0 0 9 8"><path d="M0 0 H7.5 L3.75 7 Z" fill="#6e6e6e"/></svg>
<div class="t" style="left:402.00px;top:735.41px;font-size:11.6px;color:#333;font-family:'Liberation Mono', monospace;letter-spacing:-0.39px;">{method: "do", login: {password: "WaQ7xPr3L41vMwK"}}</div>
<svg style="position:absolute;left:403px;top:746px" width="8" height="9" viewBox="0 0 8 9"><path d="M0.5 0.5 L7 4.5 L0.5 8.5 Z" fill="#6e6e6e"/></svg>
<div class="t" style="left:414.00px;top:751.61px;font-size:11.6px;color:#333;font-family:'Liberation Mono', monospace;letter-spacing:-0.39px;"><span style="color:#881391">login</span>: {password: "WaQ7xPr3L41vMwK"}</div>
<div class="t" style="left:414.00px;top:767.81px;font-size:11.6px;color:#333;font-family:'Liberation Mono', monospace;letter-spacing:-0.39px;"><span style="color:#881391">method</span>: <span style="color:#c41a16">"do"</span></div>
</body></html>
